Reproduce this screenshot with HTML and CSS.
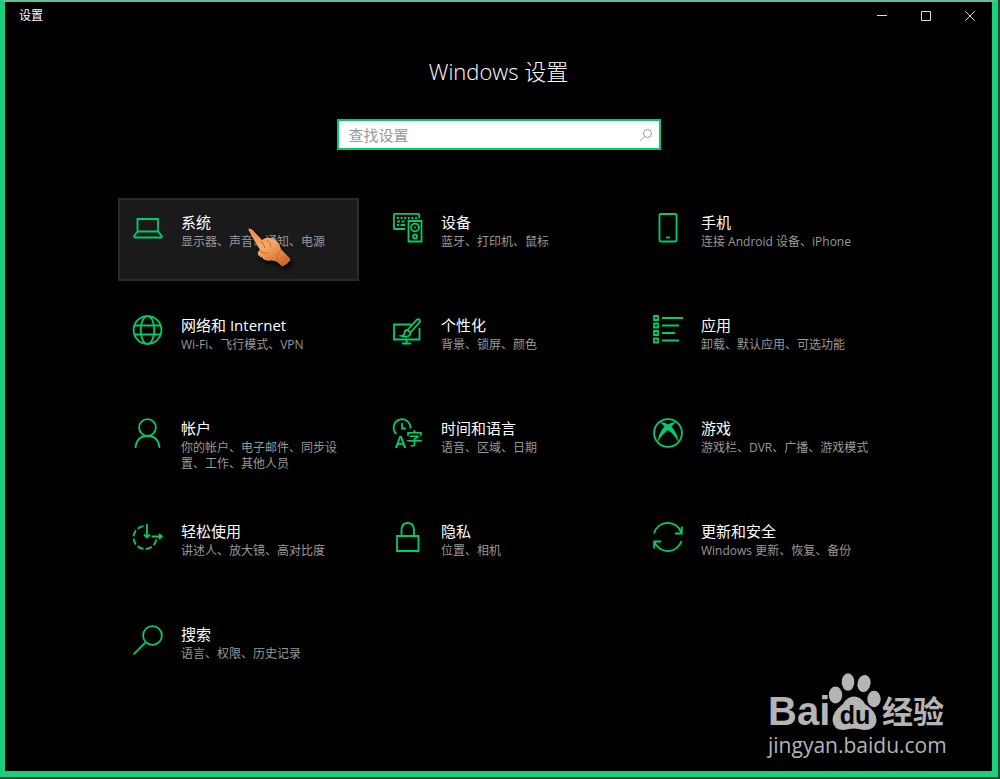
FILE: index.html
```html
<!DOCTYPE html>
<html lang="zh-CN">

<head>
    <meta charset="UTF-8">
    <meta name="viewport" content="width=device-width, initial-scale=1.0">
    <title>设置</title>
    <link rel="stylesheet" href="styles.css">
</head>

<body>
    <div class="window">
        <header class="titlebar">
            <span class="titlebar-name">设置</span>
            <div class="window-buttons">
                <button type="button" aria-label="最小化">
                    <svg width="10" height="10" viewBox="0 0 10 10"><path d="M0 4.5H10" /></svg>
                </button>
                <button type="button" aria-label="最大化">
                    <svg width="10" height="10" viewBox="0 0 10 10"><path d="M.5 .5H9.5V9.5H.5Z" /></svg>
                </button>
                <button type="button" aria-label="关闭">
                    <svg width="10" height="10" viewBox="0 0 10 10"><path d="M.3 .3L9.7 9.7M9.7 .3L.3 9.7" /></svg>
                </button>
            </div>
        </header>

        <main>
            <h1>Windows 设置</h1>

            <form class="search">
                <input type="text" placeholder="查找设置" aria-label="查找设置">
                <button type="button" aria-label="搜索">
                    <svg width="12" height="12" viewBox="0 0 12 12"><circle cx="7.5" cy="4.5" r="4" /><path d="M4.6 7.4L.3 11.7" /></svg>
                </button>
            </form>

            <nav class="tiles">
                <a href="#system" class="tile active">
                    <svg class="icon" viewBox="0 0 30 30">
                        <path d="M4.5 18.5V6H25V18.5M4.5 18.5H25L29 23.3Q29 24.5 28 24.5H2Q1 24.5 1 23.3Z" />
                    </svg>
                    <div>
                        <h2>系统</h2>
                        <p>显示器、声音、通知、电源</p>
                    </div>
                    <svg class="hand" viewBox="0 0 48 44">
                        <defs>
                            <linearGradient id="skin" x1="0" y1="0" x2="0.7" y2="1">
                                <stop offset="0" stop-color="#f08a45" />
                                <stop offset="0.5" stop-color="#f7aa68" />
                                <stop offset="1" stop-color="#cf6a28" />
                            </linearGradient>
                        </defs>
                        <path fill="url(#skin)" d="M1 .5Q3 0 4.5 2L14 12Q18 8.5 25 10.5Q31 13 33 21L42.5 31Q41 36 34 38.5Q29 32 23 32.5Q17 33.5 14 29.5Q9 28 10 24L12 21.5Q9 18 1 3Q0 1.5 1 .5Z" />
                        <path class="hand-crease" d="M13 13Q16 16 17 20M19 12Q23 15 23 19M12 23Q16 26 20 25M33 22Q27 27 30 33" />
                    </svg>
                </a>
                <a href="#devices" class="tile">
                    <svg class="icon" viewBox="0 0 30 30">
                        <path d="M12 16H2Q.9 16 .9 15V2Q.9 .9 2 .9H25Q26.3 .9 26.3 2V5.5" />
                        <path d="M4 5H24" stroke-dasharray="2 1.6" />
                        <path d="M4 8.5H13" stroke-dasharray="3 1.5" />
                        <path d="M4 12H12" stroke-dasharray="2 1.5 5 2" />
                        <path d="M15.5 8H28.5V28.5H15.5Z" />
                        <circle cx="22" cy="14.5" r="3.9" />
                        <circle cx="22" cy="14.5" r="1" class="fill" />
                        <circle cx="22" cy="23.5" r="2" />
                    </svg>
                    <div>
                        <h2>设备</h2>
                        <p>蓝牙、打印机、鼠标</p>
                    </div>
                </a>
                <a href="#phone" class="tile">
                    <svg class="icon" viewBox="0 0 30 30">
                        <rect x="6.5" y="1" width="17" height="27.5" rx="1.2" />
                        <path d="M13 24.5H17" />
                    </svg>
                    <div>
                        <h2>手机</h2>
                        <p>连接 Android 设备、iPhone</p>
                    </div>
                </a>
                <a href="#network" class="tile">
                    <svg class="icon" viewBox="0 0 30 30">
                        <circle cx="14.5" cy="14" r="13.9" />
                        <ellipse cx="14.5" cy="14" rx="6.8" ry="13.9" />
                        <path d="M2 9.5H27M2 18.5H27" />
                    </svg>
                    <div>
                        <h2>网络和 Internet</h2>
                        <p>Wi-Fi、飞行模式、VPN</p>
                    </div>
                </a>
                <a href="#personalization" class="tile">
                    <svg class="icon" viewBox="0 0 30 30">
                        <path d="M18 8.5H1V23.5H26.5V12M13.5 23.5V27.5M9 27.5H18" />
                        <path d="M14.5 14L23.5 4Q25.5 2.5 26.7 4Q27.5 5.5 26 7L17.5 16.5Z" />
                        <path d="M14.5 14Q11.5 14 11.5 17Q11.5 19.5 8.5 20Q12.5 21.5 15.5 20Q17.7 18.5 17.5 16.5" />
                    </svg>
                    <div>
                        <h2>个性化</h2>
                        <p>背景、锁屏、颜色</p>
                    </div>
                </a>
                <a href="#apps" class="tile">
                    <svg class="icon" viewBox="0 0 30 30">
                        <path d="M1 0H5V4H1ZM1 7.5H5V11.5H1ZM1 15H5V19H1ZM1 22.5H5V26.5H1Z" />
                        <path d="M9 2H30M9 9.5H26M9 17H22M9 24.5H26" />
                    </svg>
                    <div>
                        <h2>应用</h2>
                        <p>卸载、默认应用、可选功能</p>
                    </div>
                </a>
                <a href="#accounts" class="tile">
                    <svg class="icon" viewBox="0 0 30 30">
                        <circle cx="14.5" cy="8.5" r="8.4" />
                        <path d="M2.5 29Q3.500 17 14.5 17Q25.5 17 26.5 29" />
                    </svg>
                    <div>
                        <h2>帐户</h2>
                        <p>你的帐户、电子邮件、同步设置、工作、其他人员</p>
                    </div>
                </a>
                <a href="#time" class="tile">
                    <svg class="icon" viewBox="0 0 30 30">
                        <path d="M3.5 15A8.4 8.4 0 1 1 17.4 9.5M9 4V9.5H13" />
                        <text x="2" y="28.5" class="letter-a">A</text>
                        <text x="13" y="26" class="letter-zi">字</text>
                    </svg>
                    <div>
                        <h2>时间和语言</h2>
                        <p>语音、区域、日期</p>
                    </div>
                </a>
                <a href="#gaming" class="tile">
                    <svg class="icon" viewBox="0 0 30 30">
                        <circle cx="15" cy="14" r="13.9" />
                        <path class="fill" d="M7 3.5Q10 2.5 15 5.5Q20 2.5 23 3.5Q21 4.5 18.5 7.5Q25 15 25.5 23.5Q21.5 15.5 15 11Q8.5 15.5 4.5 23.5Q5 15 11.5 7.5Q9 4.5 7 3.5Z" />
                    </svg>
                    <div>
                        <h2>游戏</h2>
                        <p>游戏栏、DVR、广播、游戏模式</p>
                    </div>
                </a>
                <a href="#ease" class="tile">
                    <svg class="icon" viewBox="0 0 30 30">
                        <path d="M10.5 4.1A11.5 11.5 0 1 0 23.4 17" stroke-dasharray="6.5 2.3" />
                        <path d="M14 2V15.5M11 12.5L14 15.5L17 12.5M18.5 14.5H28.5M26 12L28.7 14.5L26 17" />
                    </svg>
                    <div>
                        <h2>轻松使用</h2>
                        <p>讲述人、放大镜、高对比度</p>
                    </div>
                </a>
                <a href="#privacy" class="tile">
                    <svg class="icon" viewBox="0 0 30 30">
                        <path d="M4 14H25.5V29H4ZM8.5 14V7.5Q9 1 14.7 1Q20.5 1 21 7.5V14" />
                    </svg>
                    <div>
                        <h2>隐私</h2>
                        <p>位置、相机</p>
                    </div>
                </a>
                <a href="#update" class="tile">
                    <svg class="icon" viewBox="0 0 30 30">
                        <path d="M1 11.5A14.3 14.3 0 0 1 28.5 11M28.8 4.5V11.5H22" />
                        <path d="M28.5 19A14.3 14.3 0 0 1 1.5 20M1.2 26.5V19.5H8" />
                    </svg>
                    <div>
                        <h2>更新和安全</h2>
                        <p>Windows 更新、恢复、备份</p>
                    </div>
                </a>
                <a href="#search" class="tile">
                    <svg class="icon" viewBox="0 0 30 30">
                        <circle cx="19.5" cy="10.5" r="9.4" />
                        <path d="M12.7 17.3L.5 29.3" />
                    </svg>
                    <div>
                        <h2>搜索</h2>
                        <p>语言、权限、历史记录</p>
                    </div>
                </a>
            </nav>
        </main>

        <div class="watermark">
            <div class="brand">
                <span class="bai">Bai</span>
                <span class="paw">
                    <svg viewBox="0 0 54 58">
                        <ellipse cx="7.5" cy="22" rx="6.7" ry="8.5" />
                        <ellipse cx="20" cy="9" rx="6.3" ry="8.8" />
                        <ellipse cx="36" cy="10.5" rx="6.5" ry="8.6" transform="rotate(12 36 10.5)" />
                        <ellipse cx="46" cy="26" rx="6.7" ry="8.3" />
                        <path d="M26 23.5Q33 23.5 37 31Q48 38 48.5 47Q48 57 36 57Q30 55.5 26 55.5Q21 55.5 16 57Q5 57 4.5 47Q5 38 15 31Q19 23.5 26 23.5Z" />
                    </svg>
                    <span>du</span>
                </span>
                <span class="jingyan">经验</span>
            </div>
            <div class="site">jingyan.baidu.com</div>
        </div>
    </div>
</body>

</html>
```

FILE: styles.css
```css
* {
    box-sizing: border-box;
}

body {
    margin: 0;
    padding: 0 2px 2px 0;
    background-color: #23483a;
    color: #fff;
    font-family: "Open Sans", "Noto Sans CJK SC", sans-serif;
}

.window {
    position: relative;
    min-height: calc(100vh - 2px);
    border: 6px solid #1bd07b;
    border-width: 2px 6px 6px 5px;
    border-top-color: #5fbf95;
    background-color: #000;
}

/* Title bar */
.titlebar {
    display: flex;
    justify-content: space-between;
    align-items: center;
    height: 28px;
    padding-left: 14px;
}

.titlebar-name {
    font-size: 12px;
    line-height: 18px;
}

.window-buttons {
    display: flex;
}

.window-buttons button {
    display: flex;
    align-items: center;
    justify-content: center;
    width: 44px;
    height: 28px;
    padding: 0;
    border: 0;
    background: none;
}

.window-buttons svg {
    fill: none;
    stroke: #ddd;
    stroke-width: 1;
}

/* Heading and search */
h1 {
    margin: 25px 0 32px;
    font-size: 22px;
    font-weight: 300;
    line-height: 32px;
    text-align: center;
}

.search {
    display: flex;
    align-items: center;
    width: 324px;
    height: 31px;
    margin: 0 auto 48px;
    border: 2px solid #00cc6a;
    background-color: #fff;
}

.search input {
    flex: 1;
    min-width: 0;
    height: 24px;
    padding: 0 10px;
    border: 0;
    outline: 0;
    background: none;
    font-family: inherit;
    font-size: 15px;
}

.search input::placeholder {
    color: #999;
}

.search button {
    display: flex;
    padding: 0 7px;
    border: 0;
    background: none;
}

.search svg {
    fill: none;
    stroke: #999;
}

/* Tiles */
.tiles {
    display: grid;
    grid-template-columns: repeat(auto-fill, 241px);
    grid-auto-rows: minmax(83px, auto);
    gap: 20px 19px;
    justify-content: center;
    max-width: 761px;
    margin: 0 auto;
}

.tile {
    position: relative;
    display: flex;
    gap: 18px;
    padding: 13px 4px 4px 13px;
    border: 2px solid transparent;
    color: #fff;
    text-decoration: none;
}

.tile.active {
    border-color: #2b2b2b;
    background-color: #1a1a1a;
}

.tile h2 {
    margin: 0 0 2px;
    font-size: 15px;
    font-weight: 400;
    line-height: 19px;
}

.tile p {
    margin: 0;
    color: #999;
    font-size: 12px;
    line-height: 16px;
}

.icon {
    flex: none;
    width: 30px;
    height: 30px;
    overflow: visible;
    fill: none;
    stroke: #00cc6a;
    stroke-width: 1.8;
}

.icon .fill {
    fill: #00cc6a;
    stroke: none;
}

.icon text {
    fill: #00cc6a;
    stroke: none;
}

.letter-a {
    font-size: 17px;
    font-weight: 600;
}

.letter-zi {
    font-size: 17px;
    font-weight: 500;
}

.hand {
    position: absolute;
    top: 28px;
    left: 128px;
    width: 48px;
    height: 44px;
    filter: drop-shadow(2px 3px 2px #000);
}

.hand-crease {
    fill: none;
    stroke: #c96a30;
    stroke-width: 1;
}

/* Watermark */
.watermark {
    position: absolute;
    right: 44px;
    bottom: 12px;
    width: 180px;
    color: #b5b5b5;
}

.brand {
    display: flex;
    align-items: flex-end;
    height: 58px;
    line-height: 40px;
}

.bai {
    width: 60px;
    font-family: "Liberation Sans", sans-serif;
    font-size: 40px;
    font-weight: 700;
}

.paw {
    position: relative;
    width: 54px;
    height: 58px;
}

.paw svg {
    display: block;
    fill: #b5b5b5;
}

.paw span {
    position: absolute;
    right: 0;
    bottom: 2px;
    left: 0;
    color: #000;
    font-family: "Liberation Sans", sans-serif;
    font-size: 25px;
    font-weight: 700;
    line-height: 28px;
    text-align: center;
}

.jingyan {
    font-size: 31px;
    font-weight: 700;
}

.site {
    font-size: 21px;
    line-height: 28px;
    white-space: nowrap;
}
```
